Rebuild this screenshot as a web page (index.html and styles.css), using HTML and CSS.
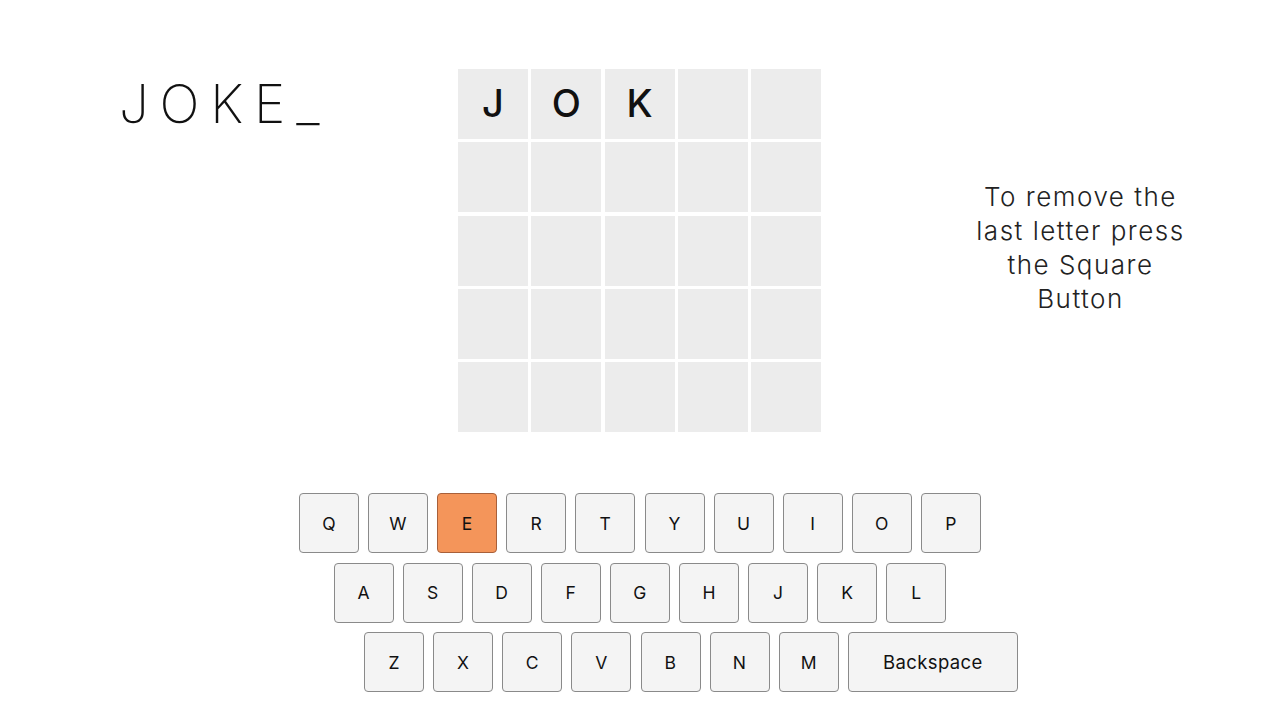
FILE: index.html
```html
<!DOCTYPE html>
<html>
<head>
<meta charset="utf-8">
<link rel="stylesheet" href="styles.css">
</head>
<body>
<div class="page">
  <div class="top">
    <div class="left"><div class="title">JOKE_</div></div>
    <div class="board">
      <div class="cell">J</div><div class="cell">O</div><div class="cell">K</div><div class="cell"></div><div class="cell"></div>
      <div class="cell"></div><div class="cell"></div><div class="cell"></div><div class="cell"></div><div class="cell"></div>
      <div class="cell"></div><div class="cell"></div><div class="cell"></div><div class="cell"></div><div class="cell"></div>
      <div class="cell"></div><div class="cell"></div><div class="cell"></div><div class="cell"></div><div class="cell"></div>
      <div class="cell"></div><div class="cell"></div><div class="cell"></div><div class="cell"></div><div class="cell"></div>
    </div>
    <div class="right"><p class="hint">To remove the<br>last letter press<br>the Square<br>Button</p></div>
  </div>
  <div class="keyboard">
    <div class="row">
      <div class="key">Q</div><div class="key">W</div><div class="key active">E</div><div class="key">R</div><div class="key">T</div><div class="key">Y</div><div class="key">U</div><div class="key">I</div><div class="key">O</div><div class="key">P</div>
    </div>
    <div class="row">
      <div class="key">A</div><div class="key">S</div><div class="key">D</div><div class="key">F</div><div class="key">G</div><div class="key">H</div><div class="key">J</div><div class="key">K</div><div class="key">L</div>
    </div>
    <div class="row row3">
      <div class="key">Z</div><div class="key">X</div><div class="key">C</div><div class="key">V</div><div class="key">B</div><div class="key">N</div><div class="key">M</div><div class="key wide">Backspace</div>
    </div>
  </div>
</div>
</body>
</html>
```
FILE: styles.css
```css
html, body {
  margin: 0;
  padding: 0;
  background: #ffffff;
}
body {
  font-family: "Inter", "Lato", "Noto Sans", sans-serif;
  color: #111;
}
.page {
  width: 1280px;
  height: 720px;
  overflow: hidden;
}
.top {
  display: grid;
  grid-template-columns: 458px 363px 1fr;
  padding-top: 69px;
}
.left {
  padding-left: 119px;
  padding-top: 9px;
}
.title {
  font-size: 53px;
  font-weight: 200;
  letter-spacing: 10.8px;
  line-height: 52px;
}
.board {
  display: grid;
  grid-template-columns: repeat(5, 70px);
  grid-auto-rows: 70px;
  gap: 3.25px;
}
.cell {
  background: #ececec;
  display: flex;
  align-items: center;
  justify-content: center;
  font-size: 38px;
  font-weight: 500;
  padding-bottom: 2px;
  box-sizing: border-box;
}
.right {
  display: flex;
  align-items: center;
  justify-content: center;
  padding-left: 60px;
}
.hint {
  margin: 0;
  text-align: center;
  font-size: 26px;
  font-weight: 300;
  letter-spacing: 1.5px;
  line-height: 34px;
  color: #222;
  padding-bottom: 6px;
}
.keyboard {
  margin-top: 61px;
  display: flex;
  flex-direction: column;
  gap: 9.5px;
  align-items: center;
}
.row {
  display: flex;
  gap: 9.1px;
  justify-content: center;
}
.row3 {
  padding-left: 102px;
}
.key {
  width: 60px;
  height: 60px;
  box-sizing: border-box;
  border: 1px solid #8a8a8a;
  border-radius: 4px;
  background: #f4f4f4;
  display: flex;
  align-items: center;
  justify-content: center;
  font-size: 17.5px;
  font-weight: 400;
  letter-spacing: 0.4px;
  color: #111;
}
.key.active {
  background: #f4955a;
  border-color: #a8603a;
}
.key.wide {
  width: 170px;
  font-size: 18.5px;
}
```
